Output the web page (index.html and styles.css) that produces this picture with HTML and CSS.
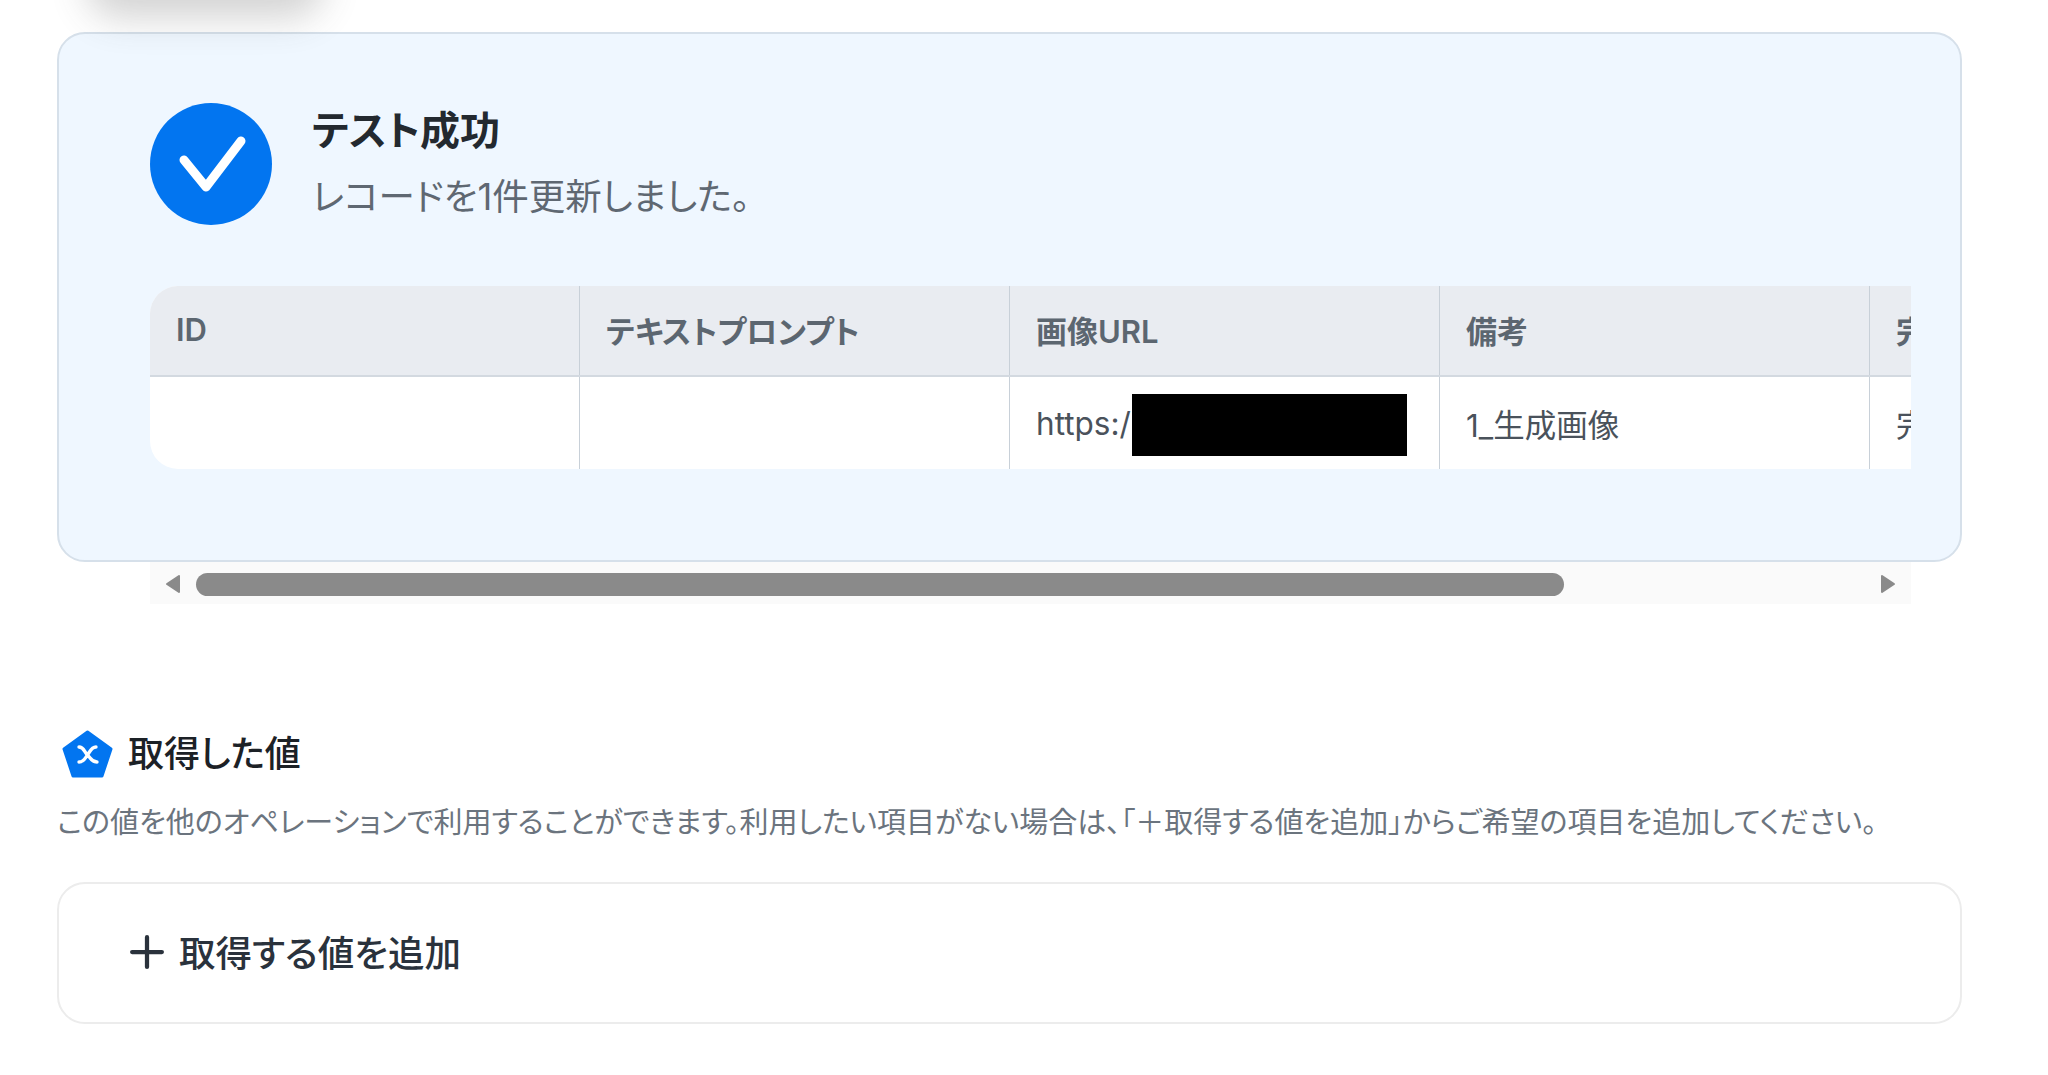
FILE: index.html
```html
<!DOCTYPE html>
<html lang="ja">
<head>
  <meta charset="UTF-8" />
  <meta name="viewport" content="width=device-width, initial-scale=1.0" />
  <title>テスト成功</title>
  <link rel="stylesheet" href="styles.css">
</head>
<body>
  <div class="top-shadow"></div>

  <div class="result-card">
    <div class="result-head">
      <svg class="check-icon" viewBox="0 0 122 122">
        <circle cx="61" cy="61" r="61" fill="#0275f0"/>
        <path d="M34 57 L56 84 L91 38" fill="none" stroke="#fff" stroke-width="9" stroke-linecap="round" stroke-linejoin="round"/>
      </svg>
      <div>
        <div class="result-title">テスト成功</div>
        <div class="result-sub">レコードを1件更新しました。</div>
      </div>
    </div>

    <div class="table-wrap">
      <div class="table-row head">
        <div class="cell">ID</div>
        <div class="cell">テキストプロンプト</div>
        <div class="cell">画像URL</div>
        <div class="cell">備考</div>
        <div class="cell">完了</div>
      </div>
      <div class="table-row">
        <div class="cell"></div>
        <div class="cell"></div>
        <div class="cell">https:/<span class="redact"></span></div>
        <div class="cell">1_生成画像</div>
        <div class="cell">完了</div>
      </div>
    </div>
  </div>

  <div class="scrollbar">
    <svg class="arrow" viewBox="0 0 16 20"><path d="M14 2 L2 10 L14 18 Z" fill="#8a8a8a" stroke="#8a8a8a" stroke-width="2" stroke-linejoin="round"/></svg>
    <div class="track"><div class="thumb"></div></div>
    <svg class="arrow" viewBox="0 0 16 20"><path d="M2 2 L14 10 L2 18 Z" fill="#8a8a8a" stroke="#8a8a8a" stroke-width="2" stroke-linejoin="round"/></svg>
  </div>

  <div class="values-head">
    <svg class="penta-icon" viewBox="0 0 51 48">
      <path d="M25.5 2 L49 19 L40 46 L11 46 L2 19 Z" fill="#0275f0" stroke="#0275f0" stroke-width="3" stroke-linejoin="round"/>
      <path d="M17 17 C22 17 22 22 25.5 25 C29 28 29 32 35 32 M34 17 C29 17 28 22 25.5 25 C23 28 22 32 17 32" fill="none" stroke="#fff" stroke-width="3.4" stroke-linecap="round"/>
    </svg>
    <span class="values-title">取得した値</span>
  </div>
  <p class="values-desc">この値を他のオペレーションで利用することができます。利用したい項目がない場合は、「＋取得する値を追加」からご希望の項目を追加してください。</p>

  <div class="add-box">
    <svg class="plus-icon" viewBox="0 0 32 32"><path d="M16 2 V30 M2 16 H30" fill="none" stroke="#2a323c" stroke-width="4" stroke-linecap="round"/></svg>
    <span>取得する値を追加</span>
  </div>
</body>
</html>
```

FILE: styles.css
```css
body {
  font-family: Inter, "Noto Sans CJK JP", sans-serif;
  font-feature-settings: "palt";
  margin: 0;
  padding: 32px 86px 0 57px;
  background: #fff;
  height: 1043px;
  overflow: hidden;
  position: relative;
}
.top-shadow {
  position: absolute;
  left: 100px;
  top: -50px;
  width: 210px;
  height: 50px;
  border-radius: 20px;
  box-shadow: 0 4px 36px 14px rgba(70,70,70,0.24);
}
.result-card {
  background: #eff7ff;
  border: 2px solid #d6e0ea;
  border-radius: 28px;
  padding: 69px 49px 90px 91px;
  height: 530px;
  box-sizing: border-box;
}
.result-head {
  display: flex;
  align-items: center;
  gap: 40px;
  margin-bottom: 61px;
}
.check-icon {
  width: 122px;
  height: 122px;
  flex: none;
}
.result-title {
  font-size: 40px;
  font-weight: 700;
  color: #23292f;
  line-height: 50px;
  margin-top: -3px;
}
.result-sub {
  font-size: 36.5px;
  color: #5f6872;
  line-height: 46px;
  margin-top: 18px;
}
.table-wrap {
  background: #fff;
  border-radius: 28px 0 0 28px;
  overflow: hidden;
}
.table-row {
  display: grid;
  grid-template-columns: repeat(5, 430px);
  height: 92px;
}
.table-row.head {
  height: 91px;
  background: #e9ecf1;
  border-bottom: 2px solid #d3d9e0;
  box-sizing: border-box;
  font-weight: 600;
}
.cell {
  position: relative;
  display: flex;
  align-items: center;
  padding-left: 26px;
  font-size: 31.5px;
  color: #4a525b;
  border-right: 1px solid #c8d0d8;
  box-sizing: border-box;
  white-space: nowrap;
}
.head .cell {
  color: #5c6670;
  font-size: 31px;
  padding-bottom: 2px;
}
.redact {
  position: absolute;
  left: 122px;
  top: 17px;
  width: 275px;
  height: 62px;
  background: #000;
}
.scrollbar {
  display: flex;
  align-items: center;
  margin-left: 93px;
  width: 1761px;
  height: 42px;
  background: #fafafa;
  padding: 2px 15px 0;
  box-sizing: border-box;
}
.arrow {
  width: 16px;
  height: 20px;
  flex: none;
}
.track {
  flex: 1;
  padding: 0 15px;
}
.thumb {
  width: 1368px;
  height: 23px;
  background: #8a8a8a;
  border-radius: 12px;
}
.values-head {
  display: flex;
  align-items: center;
  gap: 15px;
  margin: 126px 0 0 5px;
}
.penta-icon {
  width: 51px;
  height: 48px;
  flex: none;
}
.values-title {
  font-size: 36px;
  font-weight: 500;
  color: #1c2126;
  line-height: 48px;
}
.values-desc {
  margin: 25px 0 0;
  font-size: 29px;
  line-height: 40px;
  color: #6b747e;
  white-space: nowrap;
}
.add-box {
  display: flex;
  align-items: center;
  gap: 15px;
  margin-top: 39px;
  height: 142px;
  box-sizing: border-box;
  padding: 0 0 3px 71px;
  border: 2px solid #ececec;
  border-radius: 28px;
  font-size: 36.5px;
  font-weight: 500;
  color: #2a323c;
}
.plus-icon {
  width: 34px;
  height: 34px;
  flex: none;
}
```
